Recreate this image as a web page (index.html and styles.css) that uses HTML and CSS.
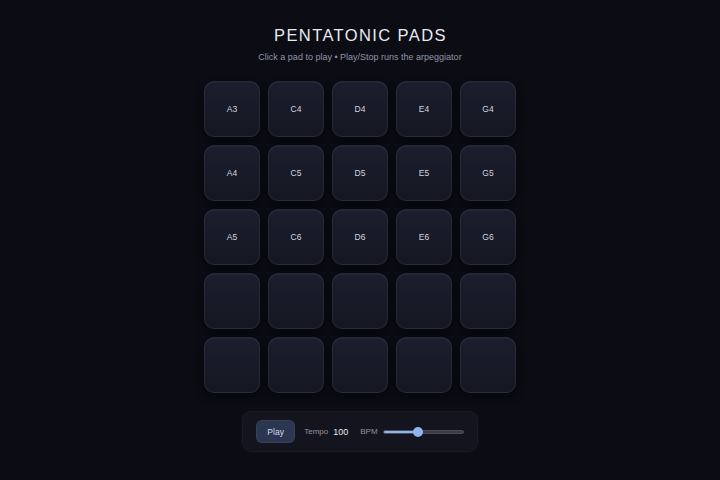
FILE: index.html
```html
<!DOCTYPE html>
<html>
<head>
<meta charset="utf-8">
<link rel="stylesheet" href="styles.css">
</head>
<body>
<main class="app">
  <h1 class="title">PENTATONIC PADS</h1>
  <p class="subtitle">Click a pad to play • Play/Stop runs the arpeggiator</p>
  <div class="grid">
    <div class="pad">A3</div><div class="pad">C4</div><div class="pad">D4</div><div class="pad">E4</div><div class="pad">G4</div>
    <div class="pad">A4</div><div class="pad">C5</div><div class="pad">D5</div><div class="pad">E5</div><div class="pad">G5</div>
    <div class="pad">A5</div><div class="pad">C6</div><div class="pad">D6</div><div class="pad">E6</div><div class="pad">G6</div>
    <div class="pad"></div><div class="pad"></div><div class="pad"></div><div class="pad"></div><div class="pad"></div>
    <div class="pad"></div><div class="pad"></div><div class="pad"></div><div class="pad"></div><div class="pad"></div>
  </div>
  <div class="controls">
    <button class="play">Play</button>
    <span class="label">Tempo</span>
    <span class="value">100</span>
    <span class="label bpm">BPM</span>
    <div class="slider"><div class="fill" style="width:43%"></div><div class="thumb" style="left:43%"></div></div>
  </div>
</main>
</body>
</html>
```
FILE: styles.css
```css
html, body {
  margin: 0;
  height: 100%;
  background: #0b0c14;
  font-family: "Liberation Sans", Arial, sans-serif;
  color: #d8dce6;
}
.app {
  display: flex;
  flex-direction: column;
  align-items: center;
  padding-top: 23px;
}
.title {
  margin: 0;
  font-size: 16.5px;
  line-height: 24px;
  font-weight: 400;
  letter-spacing: 1.4px;
  padding-left: 1px;
  color: #e8eaf0;
}
.subtitle {
  margin: 3px 0 0;
  font-size: 9px;
  line-height: 14px;
  color: #9096a4;
}
.grid {
  margin-top: 17px;
  display: grid;
  grid-template-columns: repeat(5, 56px);
  grid-auto-rows: 56px;
  gap: 8px;
}
.pad {
  box-sizing: border-box;
  border-radius: 10px;
  border: 1px solid rgba(255,255,255,0.07);
  background: linear-gradient(180deg, #1b1e2c 0%, #151722 100%);
  box-shadow: 0 4px 10px rgba(0,0,0,0.45), inset 0 1px 0 rgba(255,255,255,0.03);
  display: flex;
  align-items: center;
  justify-content: center;
  font-size: 8.5px;
  color: #d0d4de;
}
.controls {
  margin-top: 18px;
  box-sizing: border-box;
  width: 236px;
  height: 41px;
  border-radius: 9px;
  background: #13141d;
  border: 1px solid rgba(255,255,255,0.03);
  display: flex;
  align-items: center;
  padding: 0 13px;
}
.play {
  width: 40px;
  height: 23px;
  border: 1px solid rgba(255,255,255,0.06);
  border-radius: 6px;
  background: #2b3651;
  color: #d4dbea;
  font-family: "Liberation Sans", Arial, sans-serif;
  font-size: 8.5px;
  padding: 0;
}
.label {
  margin-left: 9px;
  font-size: 8px;
  color: #8f95a3;
}
.value {
  margin-left: 5px;
  font-size: 9px;
  color: #e6e9f0;
}
.bpm { margin-left: 12px; }
.slider {
  position: relative;
  margin-left: 5px;
  width: 83px;
  height: 4px;
  border-radius: 2px;
  background: #3a3d48;
  border: 1px solid #4a4d58;
  box-sizing: border-box;
}
.fill {
  height: 100%;
  border-radius: 2px;
  background: #8fb4ee;
}
.thumb {
  position: absolute;
  top: 50%;
  width: 10px;
  height: 10px;
  border-radius: 50%;
  background: #8fb4ee;
  transform: translate(-50%, -50%);
}
```
